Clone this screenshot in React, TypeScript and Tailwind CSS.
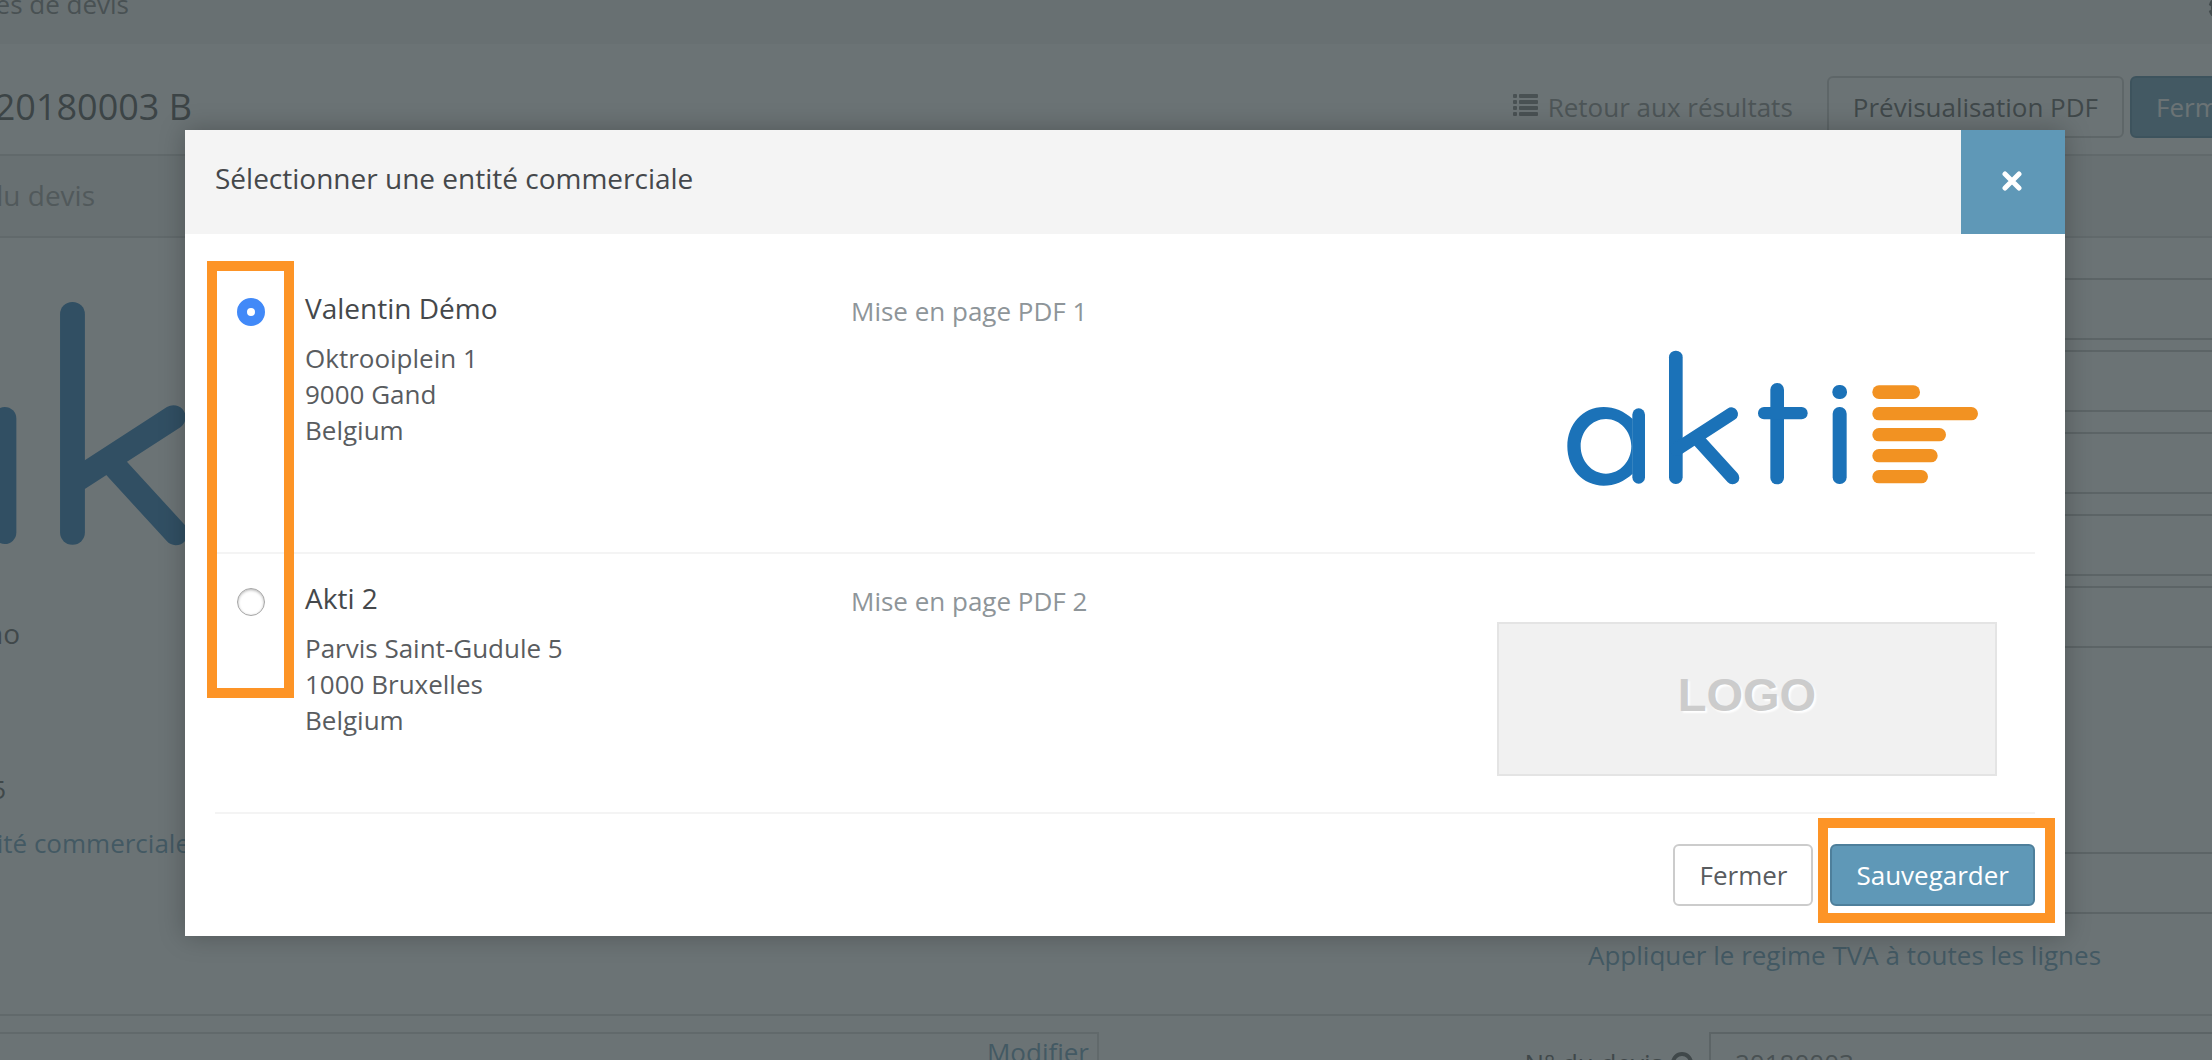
import { FaCog } from "react-icons/fa";

const entities = [
  {
    id: "valentin",
    name: "Valentin Démo",
    address: ["Oktrooiplein 1", "9000 Gand", "Belgium"],
    layout: "Mise en page PDF 1",
    hasLogo: true,
  },
  {
    id: "akti2",
    name: "Akti 2",
    address: ["Parvis Saint-Gudule 5", "1000 Bruxelles", "Belgium"],
    layout: "Mise en page PDF 2",
    hasLogo: false,
  },
];

function AktiLogo({ className }: { className: string }) {
  return (
    <svg viewBox="-9 36 1500 552" className={className} role="img" aria-label="akti">
      <g fill="#1b72b8">
        <path
          fillRule="evenodd"
          d="M398 297C373 274 343 261 311 261C248 261 202 313 202 379C202 445 248 497 311 497C343 497 373 484 398 461ZM318 297C360 297 394 334 394 379C394 424 360 461 318 461C276 461 242 424 242 379C242 334 276 297 318 297Z"
        />
        <rect x="397" y="265" width="38" height="226" rx="19" />
        <rect x="507" y="92" width="41" height="400" rx="20" />
        <rect x="811" y="189" width="41" height="304" rx="20" />
        <rect x="774" y="261" width="149" height="37" rx="18" />
        <rect x="998" y="261" width="42" height="231" rx="20" />
        <rect x="997" y="195" width="44" height="42" rx="20" />
      </g>
      <g stroke="#1b72b8" strokeWidth="40" strokeLinecap="round">
        <path d="M694 282L530 388" />
        <path d="M590 355L698 473" />
      </g>
      <g fill="#f29222">
        <rect x="1117" y="196" width="143" height="41" rx="20" />
        <rect x="1117" y="261" width="317" height="40" rx="20" />
        <rect x="1117" y="324" width="221" height="40" rx="20" />
        <rect x="1117" y="387" width="196" height="40" rx="20" />
        <rect x="1117" y="450" width="167" height="40" rx="20" />
      </g>
    </svg>
  );
}

function ListIcon() {
  return (
    <svg viewBox="0 0 25 22" className="mb-1 h-[22px] w-[25px]" fill="#777" aria-hidden="true">
      {[0, 6, 12, 18].map((y) => (
        <g key={y}>
          <rect x="0" y={y} width="4" height="4" rx="1" />
          <rect x="6" y={y} width="19" height="4" rx="1" />
        </g>
      ))}
    </svg>
  );
}

function HelpIcon() {
  return (
    <svg viewBox="0 0 22 22" className="size-[22px]" fill="none" stroke="#555" strokeWidth="4" aria-hidden="true">
      <circle cx="11" cy="11" r="9" />
    </svg>
  );
}

function Field({ label }: { label: string }) {
  return (
    <input
      aria-label={label}
      className="block h-[62px] w-full shrink-0 border-y-2 border-l-2 border-[#c4c4c4] bg-white px-6"
    />
  );
}

function QuotePage() {
  return (
    <div className="flex h-screen flex-col overflow-hidden bg-white text-[26px] leading-9 text-[#555]">
      <div className="flex h-11 shrink-0 items-start justify-between bg-[#f3f3f3]">
        <div className="-mt-3.5 flex w-[129px] justify-end whitespace-nowrap text-[#777]">es de devis</div>
        <FaCog className="-mt-1 -mr-5 size-6 text-[#666]" />
      </div>

      <div className="flex h-[110px] shrink-0 items-center justify-between">
        <h1 className="flex w-[192px] justify-end whitespace-nowrap pt-4 text-[36px] leading-[44px] text-[#444]">
          20180003 B
        </h1>
        <div className="flex items-center gap-1.5 pt-4">
          <a href="#" className="mr-7 flex items-center gap-2.5 text-[#888]">
            <ListIcon />
            Retour aux résultats
          </a>
          <button className="h-[62px] rounded-md border-2 border-[#ccc] bg-white px-6">Prévisualisation PDF</button>
          <button className="-mr-[58px] h-[62px] rounded-l-md border-2 border-[#4a7f9f] bg-[#5f98b7] px-6 text-white">
            Fermer
          </button>
        </div>
      </div>

      <div className="flex h-[84px] shrink-0 items-center border-y-2 border-[#d5d5d5] bg-[#f3f3f3]">
        <div className="flex w-[95px] justify-end whitespace-nowrap pb-0.5 text-[28px] text-[#999]">du devis</div>
      </div>

      <div className="flex h-[778px] shrink-0 justify-between border-b-2 border-[#d5d5d5]">
        <div className="w-[660px]">
          <AktiLogo className="mt-[30px] -ml-[253px] h-[335px] w-[910px]" />
          <div className="mt-3 flex w-5 justify-end text-[28px]">mo</div>
          <div className="mt-[120px] flex w-1.5 justify-end">5</div>
          <a href="#" className="mt-[18px] flex w-[190px] justify-end whitespace-nowrap text-[#5f98b7]">
            entité commerciale
          </a>
        </div>
        <div className="flex w-[624px] flex-col pt-10">
          <Field label="Société" />
          <div className="h-2.5 shrink-0" />
          <Field label="Contact" />
          <div className="h-5 shrink-0" />
          <Field label="Adresse" />
          <div className="h-5 shrink-0" />
          <Field label="Pays" />
          <div className="h-2.5 shrink-0" />
          <Field label="Langue" />
          <div className="h-[204px] shrink-0" />
          <Field label="Régime TVA" />
          <a href="#" className="mt-[23px] whitespace-nowrap text-[#5f98b7]">
            Appliquer le regime TVA à toutes les lignes
          </a>
        </div>
      </div>

      <div className="flex shrink-0 items-start justify-between pt-4">
        <div className="flex h-[62px] w-[1099px] justify-end border-y-2 border-r-2 border-[#d5d5d5] px-2">
          <a href="#" className="text-[#5f98b7]">
            Modifier
          </a>
        </div>
        <div className="flex items-center">
          <label htmlFor="quote-number" className="mr-4 flex items-center gap-2 text-[#555]">
            N° du devis
            <HelpIcon />
          </label>
          <input
            id="quote-number"
            defaultValue="20180003"
            className="h-[62px] w-[503px] border-y-2 border-l-2 border-[#c4c4c4] bg-white px-6 text-[#777]"
          />
        </div>
      </div>
    </div>
  );
}

function EntityRow({ entity }: { entity: (typeof entities)[number] }) {
  return (
    <div className="grid grid-cols-[90px_546px_1fr] items-start border-b-2 border-[#f4f4f4]">
      <input
        type="radio"
        name="entity"
        id={entity.id}
        defaultChecked={entity.hasLogo}
        className="mt-[34px] ml-[22px] size-7 appearance-none rounded-full border border-[#a6a6a6] bg-white shadow-[inset_0_1px_3px_rgba(0,0,0,0.3)] checked:border-[10px] checked:border-[#4189f8] checked:shadow-none"
      />
      <label htmlFor={entity.id} className="pt-[26px]">
        <span className="block text-[28px] text-[#45484b]">{entity.name}</span>
        <span className="mt-3.5 block">
          {entity.address.map((line) => (
            <span key={line} className="block">
              {line}
            </span>
          ))}
        </span>
      </label>
      <div className="flex items-start justify-between pr-[38px]">
        <span className="pt-[29px] text-[#8e9599]">{entity.layout}</span>
        {entity.hasLogo ? (
          <AktiLogo className="mt-[68px] mb-9 h-[184px] w-[500px]" />
        ) : (
          <div className="mt-[68px] mb-9 flex h-[154px] w-[500px] items-center justify-center border-2 border-[#e4e4e4] bg-[#f1f1f1] pb-2 font-['Liberation_Sans',sans-serif] text-[47px] font-bold text-[#ccc] [text-shadow:2px_2px_2px_#fff]">
            LOGO
          </div>
        )}
      </div>
    </div>
  );
}

function EntityDialog() {
  return (
    <div
      role="dialog"
      aria-labelledby="dialog-title"
      className="relative mt-[130px] mr-[147px] ml-[185px] bg-white text-[26px] leading-9 text-[#595c5f] shadow-[0_0_24px_rgba(0,0,0,0.25)]"
    >
      <div className="flex h-[104px] items-center justify-between bg-[#f4f4f4] pl-[30px]">
        <h2 id="dialog-title" className="pb-2 text-[28px] text-[#45484b]">
          Sélectionner une entité commerciale
        </h2>
        <button
          aria-label="Fermer la fenêtre"
          className="flex size-[104px] items-center justify-center bg-[#5f98b7] pr-0.5 pb-0.5"
        >
          <svg viewBox="0 0 20 20" className="size-5" stroke="#fff" strokeWidth="5" strokeLinecap="round">
            <path d="M3 3L17 17M17 3L3 17" />
          </svg>
        </button>
      </div>

      <div className="px-[30px] pt-[30px]">
        {entities.map((entity) => (
          <EntityRow key={entity.id} entity={entity} />
        ))}
      </div>

      <div className="flex justify-end gap-[17px] p-[30px]">
        <button className="h-[62px] rounded-md border-2 border-[#ccc] bg-white px-6">Fermer</button>
        <div className="relative">
          <button className="h-[62px] rounded-md border-2 border-[#4e7f9b] bg-[#5f98b7] px-6 text-white">
            Sauvegarder
          </button>
          <div className="pointer-events-none absolute -top-[26px] -right-5 -bottom-[17px] -left-3 border-10 border-[#fd9426]" />
        </div>
      </div>

      <div className="pointer-events-none absolute top-[131px] left-[22px] h-[437px] w-[87px] border-10 border-[#fd9426]" />
    </div>
  );
}

export default function App() {
  return (
    <div className="relative h-screen overflow-hidden font-['Open_Sans',sans-serif]">
      <QuotePage />
      <div className="absolute inset-0 bg-[rgba(57,68,71,0.75)]">
        <EntityDialog />
      </div>
    </div>
  );
}
